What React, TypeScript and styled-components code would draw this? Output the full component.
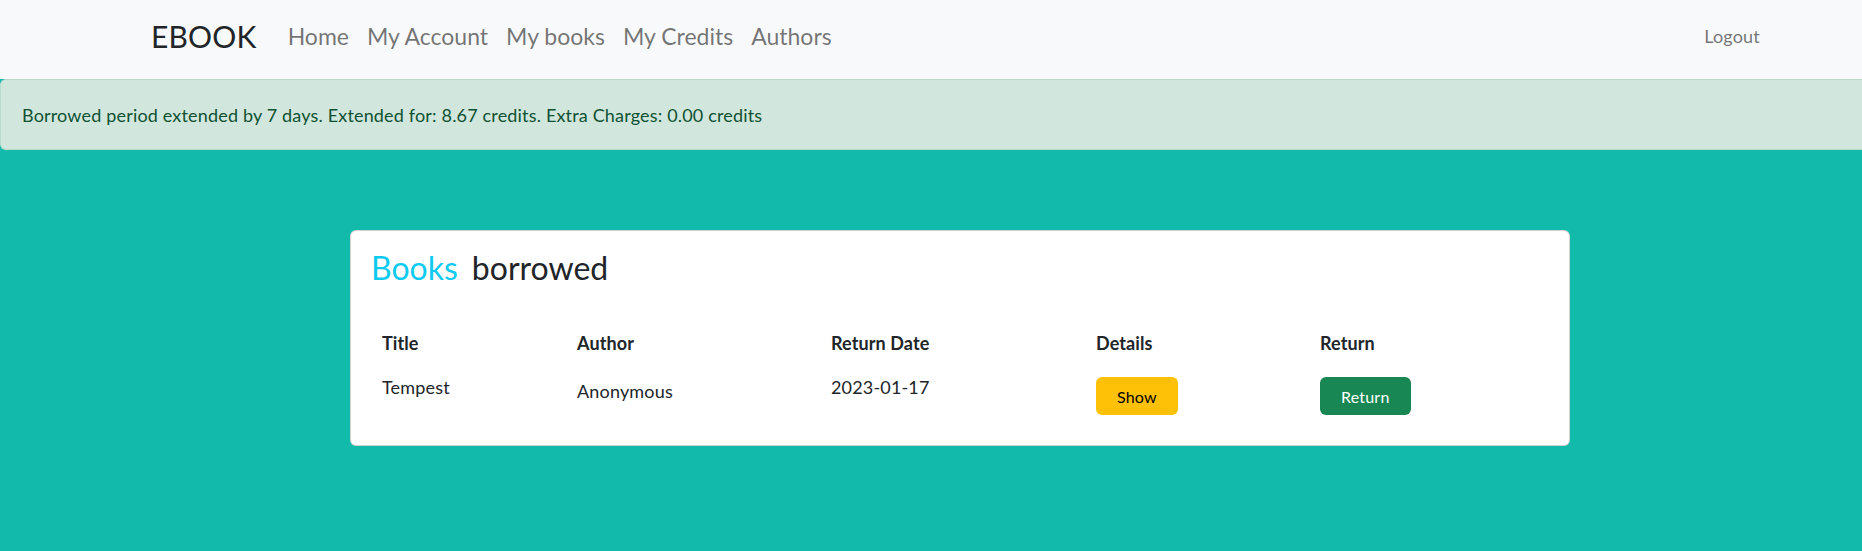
import React from "react";
import styled, { createGlobalStyle } from "styled-components";

const Global = createGlobalStyle`
  html, body { margin: 0; padding: 0; }
  body {
    background: #12baab;
    font-family: Lato, "Noto Sans", "Liberation Sans", sans-serif;
    color: #212529;
    overflow-x: hidden;
    min-height: 551px;
  }
  * { box-sizing: border-box; }
`;

const Navbar = styled.nav`
  height: 79px;
  background: #f8f9fa;
  display: flex;
  align-items: center;
  padding: 0 102px 8px 151px;
`;

const Brand = styled.a`
  font-size: 30px;
  color: #212529;
  margin-right: 31px;
  text-decoration: none;
  letter-spacing: 0.2px;
`;

const NavLinks = styled.div`
  display: flex;
  gap: 18px;
`;

const NavLink = styled.a`
  font-size: 23px;
  color: rgba(0, 0, 0, 0.55);
  text-decoration: none;
`;

const Logout = styled.a`
  margin-left: auto;
  font-size: 18px;
  letter-spacing: 0.2px;
  color: rgba(0, 0, 0, 0.55);
  text-decoration: none;
`;

const Alert = styled.div`
  height: 71px;
  background: #d1e7dd;
  border: 1px solid #badbcc;
  border-right: none;
  border-radius: 6px 0 0 6px;
  color: #0f5132;
  font-size: 18px;
  letter-spacing: 0.17px;
  display: flex;
  align-items: center;
  padding: 0 21px;
`;

const Main = styled.main`
  padding: 80px 0 0 350px;
`;

const Card = styled.section`
  width: 1220px;
  background: #fff;
  border: 1px solid rgba(0, 0, 0, 0.175);
  border-radius: 6px;
  padding: 18px 22px 22px 22px;
`;

const Heading = styled.h2`
  margin: 0 0 37px -2px;
  font-size: 32px;
  font-weight: 400;
  line-height: 1.2;
  display: flex;
  gap: 14px;
`;

const Accent = styled.span`
  color: #0dcaf0;
`;

const Table = styled.table`
  border-collapse: collapse;
  table-layout: fixed;
  width: 1176px;
`;

const Th = styled.th<{ $w?: number }>`
  text-align: left;
  font-size: 18px;
  font-weight: 700;
  letter-spacing: 0.1px;
  padding: 8px 9px 14px 9px;
  width: ${(p) => (p.$w ? `${p.$w}px` : "auto")};
`;

const Td = styled.td<{ $shift?: number }>`
  font-size: 18px;
  letter-spacing: 0.17px;
  padding: ${(p) => 8 + (p.$shift || 0)}px 9px 8px 9px;
  vertical-align: top;
  color: #212529;
`;

const Button = styled.button<{ $variant: "warning" | "success" }>`
  height: 38px;
  padding: 0 21px;
  font-family: inherit;
  font-size: 16px;
  letter-spacing: 0.2px;
  border: none;
  border-radius: 6px;
  background: ${(p) => (p.$variant === "warning" ? "#ffc107" : "#198754")};
  color: ${(p) => (p.$variant === "warning" ? "#000" : "#fff")};
  margin-top: 1px;
`;

export default function App() {
  return (
    <>
      <Global />
      <Navbar>
        <Brand>EBOOK</Brand>
        <NavLinks>
          <NavLink>Home</NavLink>
          <NavLink>My Account</NavLink>
          <NavLink>My books</NavLink>
          <NavLink>My Credits</NavLink>
          <NavLink>Authors</NavLink>
        </NavLinks>
        <Logout>Logout</Logout>
      </Navbar>
      <Alert>
        Borrowed period extended by 7 days. Extended for: 8.67 credits. Extra Charges: 0.00 credits
      </Alert>
      <Main>
        <Card>
          <Heading>
            <Accent>Books</Accent>
            <span>borrowed</span>
          </Heading>
          <Table>
            <thead>
              <tr>
                <Th $w={195}>Title</Th>
                <Th $w={254}>Author</Th>
                <Th $w={265}>Return Date</Th>
                <Th $w={224}>Details</Th>
                <Th>Return</Th>
              </tr>
            </thead>
            <tbody>
              <tr>
                <Td>Tempest</Td>
                <Td $shift={4}>Anonymous</Td>
                <Td>2023-01-17</Td>
                <Td>
                  <Button $variant="warning">Show</Button>
                </Td>
                <Td>
                  <Button $variant="success">Return</Button>
                </Td>
              </tr>
            </tbody>
          </Table>
        </Card>
      </Main>
    </>
  );
}
